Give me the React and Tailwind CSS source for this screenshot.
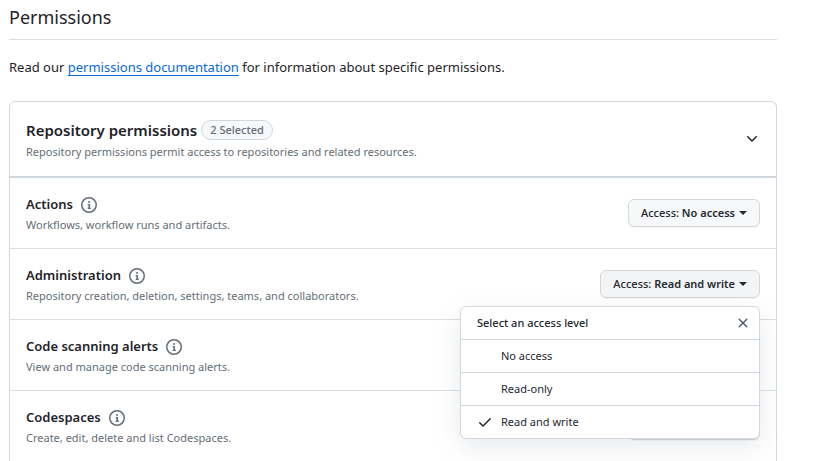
import React from "react";

const paths = {
  info: "M0 8a8 8 0 1 1 16 0A8 8 0 0 1 0 8Zm8-6.5a6.5 6.5 0 1 0 0 13 6.5 6.5 0 0 0 0-13ZM6.5 7.75A.75.75 0 0 1 7.25 7h1a.75.75 0 0 1 .75.75v2.75h.25a.75.75 0 0 1 0 1.5h-2a.75.75 0 0 1 0-1.5h.25v-2h-.25a.75.75 0 0 1-.75-.75ZM8 6a1 1 0 1 1 0-2 1 1 0 0 1 0 2Z",
  chevron: "M12.78 5.22a.749.749 0 0 1 0 1.06l-4.25 4.25a.749.749 0 0 1-1.06 0L3.22 6.28a.749.749 0 1 1 1.06-1.06L8 8.939l3.72-3.719a.749.749 0 0 1 1.06 0Z",
  x: "M3.72 3.72a.75.75 0 0 1 1.06 0L8 6.94l3.22-3.22a.749.749 0 0 1 1.275.326.749.749 0 0 1-.215.734L9.06 8l3.22 3.22a.749.749 0 0 1-.326 1.275.749.749 0 0 1-.734-.215L8 9.06l-3.22 3.22a.751.751 0 0 1-1.042-.018.751.751 0 0 1-.018-1.042L6.94 8 3.72 4.78a.75.75 0 0 1 0-1.06Z",
  check: "M13.78 4.22a.75.75 0 0 1 0 1.06l-7.25 7.25a.75.75 0 0 1-1.06 0L2.22 9.28a.751.751 0 0 1 .018-1.042.751.751 0 0 1 1.042-.018L6 10.94l6.72-6.72a.75.75 0 0 1 1.06 0Z",
};

function Octicon({ name, className = "" }) {
  return (
    <svg viewBox="0 0 16 16" className={`size-4 shrink-0 fill-current ${className}`} aria-hidden="true">
      <path d={paths[name]} />
    </svg>
  );
}

const permissions = [
  { name: "Actions", description: "Workflows, workflow runs and artifacts.", access: "No access" },
  { name: "Administration", description: "Repository creation, deletion, settings, teams, and collaborators.", access: "Read and write", open: true },
  { name: "Code scanning alerts", description: "View and manage code scanning alerts.", access: "No access" },
  { name: "Codespaces", description: "Create, edit, delete and list Codespaces.", access: "No access" },
];

const levels = ["No access", "Read-only", "Read and write"];

function AccessMenu({ selected }) {
  return (
    <div className="absolute right-0 top-full z-10 mt-2 w-[300px] overflow-hidden rounded-md border border-[#d0d7de] bg-white text-[11px] text-[#24292f] shadow-[0_8px_24px_rgba(140,149,159,0.2)]">
      <div className="flex h-8 items-center justify-between pl-4 pr-2">
        <span className="font-medium">Select an access level</span>
        <button type="button" aria-label="Close menu" className="text-[#57606a]">
          <Octicon name="x" />
        </button>
      </div>
      {levels.map((level) => (
        <button key={level} type="button" className="flex h-[33px] w-full items-center gap-2 border-t border-[#d0d7de] px-4 text-left">
          <Octicon name="check" className={level === selected ? "" : "invisible"} />
          {level}
        </button>
      ))}
    </div>
  );
}

function PermissionRow({ name, description, access, open }) {
  return (
    <li className="flex items-center justify-between border-b border-[#d8dee4] px-4 py-3.5">
      <div className="pt-0.5">
        <div className="flex h-[22px] items-center gap-2">
          <strong className="text-[13px] font-semibold">{name}</strong>
          <button type="button" aria-label={`About ${name}`} className="text-[#656d76]">
            <Octicon name="info" />
          </button>
        </div>
        <p className="text-[11px] leading-[18px] text-[#656d76]">{description}</p>
      </div>
      <div className="relative">
        <button
          type="button"
          className={`flex h-7 items-center rounded-md border border-[#d5d8da] px-3 text-[11px] font-medium whitespace-nowrap text-[#24292f] shadow-[0_1px_0_rgba(31,35,40,0.04)] ${open ? "bg-[#f3f4f6]" : "bg-[#f6f8fa]"}`}
        >
          <span>
            Access: <span className="font-semibold">{access}</span>
          </span>
          <span className="ml-1 border-x-4 border-t-4 border-x-transparent border-t-[#24292f]" />
        </button>
        {open && <AccessMenu selected={access} />}
      </div>
    </li>
  );
}

export default function App() {
  return (
    <main className="h-screen overflow-hidden bg-white pl-[9px] pr-[62px] pt-1 font-['Noto_Sans',sans-serif] text-[13px] text-[#1f2328]">
      <h2 className="border-b border-[#d8dee4] pb-2 text-lg leading-[27px]">Permissions</h2>
      <p className="mt-[17px] leading-5">
        Read our{" "}
        <a href="#docs" className="text-[#0969da] underline underline-offset-[3px]">
          permissions documentation
        </a>{" "}
        for information about specific permissions.
      </p>
      <section className="mt-6 rounded-t-md border border-[#d0d7de]">
        <header className="flex items-center justify-between border-b-2 border-[#d0d7de] px-4 py-[15px]">
          <div className="pt-0.5">
            <h3 className="flex h-[22px] items-center gap-1 text-[15px] font-semibold">
              Repository permissions
              <span className="flex h-5 items-center rounded-full border border-[#d0d7de] bg-[#f6f8fa] px-2 text-[11px] font-medium text-[#656d76]">
                2 Selected
              </span>
            </h3>
            <p className="mt-0.5 text-[11px] leading-[18px] text-[#656d76]">
              Repository permissions permit access to repositories and related resources.
            </p>
          </div>
          <button type="button" aria-label="Collapse repository permissions">
            <Octicon name="chevron" />
          </button>
        </header>
        <ul>
          {permissions.map((permission) => (
            <PermissionRow key={permission.name} {...permission} />
          ))}
        </ul>
      </section>
    </main>
  );
}
